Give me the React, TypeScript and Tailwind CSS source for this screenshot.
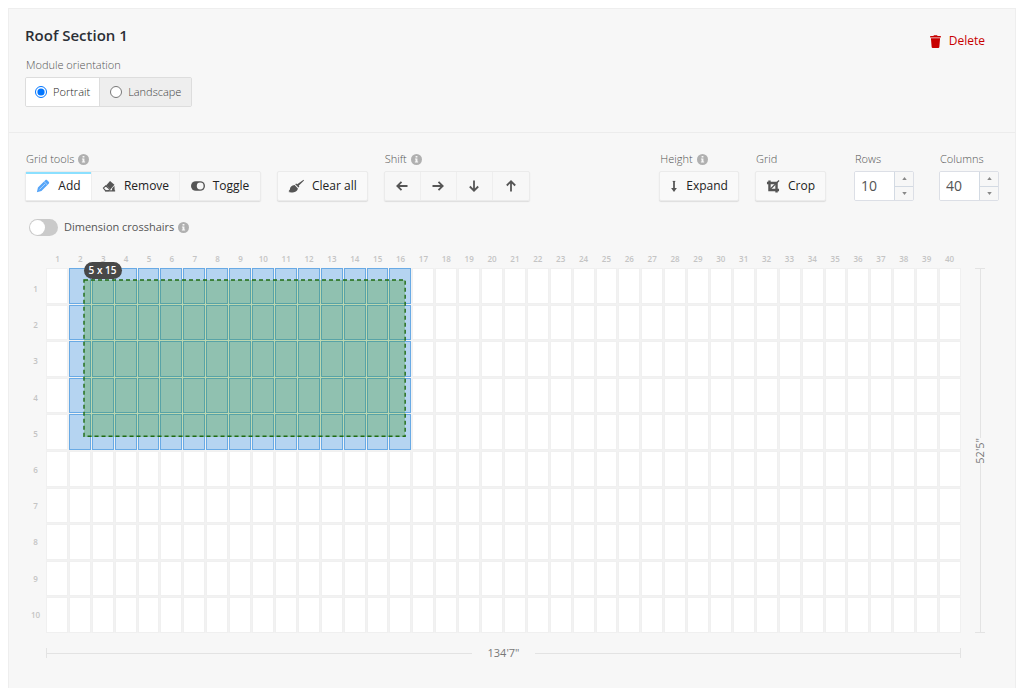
import { useId, useState } from 'react';
import type { ReactNode } from 'react';
import clsx from 'clsx';

const ROW_COUNT = 10;
const COLUMN_COUNT = 40;

const rowNumbers = Array.from({ length: ROW_COUNT }, (_, i) => i + 1);
const columnNumbers = Array.from({ length: COLUMN_COUNT }, (_, i) => i + 1);

const isInitiallyFilled = (row: number, column: number) => row <= 5 && column >= 2 && column <= 16;

function InfoIcon() {
  return (
    <svg viewBox="0 0 12 12" className="size-[11px] shrink-0" aria-hidden="true">
      <circle cx="6" cy="6" r="6" fill="#b0b0b0" />
      <path d="M5 2.2h2v1.6H5zM4.3 4.8H7v3.4h.8v1.2H4.2V8.2H5V6h-.7z" fill="#f7f7f7" />
    </svg>
  );
}

function PencilIcon() {
  return (
    <svg viewBox="0 0 16 16" className="size-[14px]" aria-hidden="true">
      <path
        d="M1 15l1.200-5.200L10.600 1.500c.7-.7 1.500-.7 2.200 0l1.700 1.700c.7.7.7 1.500 0 2.200L6.200 13.800z"
        fill="#56a5f8"
      />
      <path d="M9.300 3l3.700 3.700M4 11.900l6.300-6.200" stroke="#d6eaff" strokeWidth=".8" />
    </svg>
  );
}

function EraserIcon() {
  return (
    <svg viewBox="0 0 16 16" className="size-[14px]" aria-hidden="true">
      <path d="M9.200 2.200l5 4.500-4.400 5-5.200-4.400z" fill="#555" />
      <path d="M4.200 7.800L1.600 10.400l2.400 3h3.400l1.600-1.700z" fill="#f7f7f7" stroke="#555" strokeWidth="1.300" />
      <path d="M3.500 12.800H15v1.500H3.500zM11.500 10.800l2.700-3 .3 5h-3z" fill="#555" />
    </svg>
  );
}

function ToggleIcon() {
  return (
    <svg viewBox="0 0 16 16" className="size-[14px]" aria-hidden="true">
      <rect x="0" y="2.500" width="16" height="11" rx="5.500" fill="#555" />
      <circle cx="10.500" cy="8" r="3.900" fill="#f7f7f7" />
    </svg>
  );
}

function BrushIcon() {
  return (
    <svg viewBox="0 0 16 14" className="h-[14px] w-[16px]" fill="#555" aria-hidden="true">
      <path d="M15.600.8l.4.8-5.300 5.200.7 1-1 .8-3.200-3.300.9-.9 1.100.8z" />
      <path d="M6.600 6l3.300 3.400c-.4 2.100-1.900 3.400-4 3.800-1.900.4-3.800.3-5.600-.1l1.500-.9-1.100-.3 1.200-1.300C1.900 8 3.600 6.200 6.600 6z" />
    </svg>
  );
}

function CropIcon() {
  return (
    <svg viewBox="0 0 14 14" className="h-[13px] w-[14px]" aria-hidden="true">
      <path d="M3.200 .5v10.300h10.300M.5 3.200h10.300v10.300" fill="none" stroke="#555" strokeWidth="2.600" />
      <path d="M3.500 10.500l10-10" stroke="#555" strokeWidth="1.400" />
    </svg>
  );
}

function ExpandIcon() {
  return (
    <svg viewBox="0 0 8 14" className="h-[13px] w-[8px]" aria-hidden="true">
      <path d="M4 1v10" stroke="#555" strokeWidth="1.900" />
      <path d="M2.600 1.500h2.800" stroke="#555" strokeWidth="1" />
      <path d="M.9 8.600h6.200L4 13z" fill="#555" />
    </svg>
  );
}

function TrashIcon() {
  return (
    <svg viewBox="0 0 12 14" className="h-[13px] w-[11px]" fill="#c80000" aria-hidden="true">
      <path d="M4 .2h4v.8h3.800v1.700H.2V1H4zM1 3.500h10l-.8 9.500q-.1 1-1.200 1H3q-1.100 0-1.200-1z" />
    </svg>
  );
}

const arrowPaths = {
  left: 'M11.500 6H1.500M5.500 1.800L1.300 6l4.200 4.200',
  right: 'M.5 6h10M6.500 1.800L10.700 6l-4.200 4.200',
  down: 'M6 .5v10M1.800 6.500L6 10.700l4.200-4.200',
  up: 'M6 11.500v-10M1.800 5.500L6 1.300l4.200 4.200',
};

type Direction = keyof typeof arrowPaths;

function ToolGroup({ label, info = false, children }: { label: string; info?: boolean; children: ReactNode }) {
  return (
    <div role="group" aria-label={label}>
      <div className="flex h-4 items-center gap-1 px-px text-[11px] font-light text-[#555]">
        {label}
        {info && <InfoIcon />}
      </div>
      <div className="mt-1">{children}</div>
    </div>
  );
}

function ToolButton({ icon, children, onClick }: { icon: ReactNode; children: ReactNode; onClick?: () => void }) {
  return (
    <button
      type="button"
      onClick={onClick}
      className="flex h-[30px] items-center gap-2 rounded-xs border border-[#ebebeb] bg-[#f9f9f9] px-[10px] text-xs whitespace-nowrap text-[#222] shadow-[0_1px_1px_#ddd]"
    >
      {icon}
      {children}
    </button>
  );
}

function NumberField({ label, value, onChange }: { label: string; value: number; onChange: (value: number) => void }) {
  const id = useId();
  return (
    <div>
      <label htmlFor={id} className="block h-4 px-px text-[11px] leading-4 font-light text-[#555]">
        {label}
      </label>
      <div className="mt-1 flex h-[30px] w-[60px] overflow-hidden rounded-xs border border-[#dcdfe6] bg-white">
        <input
          id={id}
          type="text"
          inputMode="numeric"
          value={value}
          onChange={(e) => onChange(Number(e.target.value) || 0)}
          className="w-[39px] min-w-0 bg-white pl-[6px] text-sm text-[#555] outline-none"
        />
        <div className="flex flex-1 flex-col border-l border-[#d3dae3] bg-[#f7f7f7]">
          <button
            type="button"
            aria-label={`Increase ${label}`}
            onClick={() => onChange(value + 1)}
            className="flex flex-1 items-center justify-center border-b border-[#d3dae3]"
          >
            <svg viewBox="0 0 6 4" className="h-[3px] w-[5px]" fill="#888"><path d="M0 4l3-4 3 4z" /></svg>
          </button>
          <button
            type="button"
            aria-label={`Decrease ${label}`}
            onClick={() => onChange(Math.max(1, value - 1))}
            className="flex flex-1 items-center justify-center"
          >
            <svg viewBox="0 0 6 4" className="h-[3px] w-[5px]" fill="#888"><path d="M0 0l3 4 3-4z" /></svg>
          </button>
        </div>
      </div>
    </div>
  );
}

const tools = [
  { id: 'add', label: 'Add', icon: <PencilIcon />, width: 'w-[66px]' },
  { id: 'remove', label: 'Remove', icon: <EraserIcon />, width: 'w-[88px]' },
  { id: 'toggle', label: 'Toggle', icon: <ToggleIcon />, width: 'w-[80px]' },
];

function ModuleGrid() {
  return (
    <div className="mt-[11px] grid grid-cols-[21px_minmax(0,1fr)_38px] pr-4">
      <div />
      <div className="grid h-5 grid-cols-[repeat(40,minmax(0,1fr))] items-center pt-px text-center text-[8px] font-semibold text-[#c4c4c4]">
        {columnNumbers.map((column) => (
          <span key={column}>{column}</span>
        ))}
      </div>
      <div />

      <div className="grid grid-rows-10 items-center pt-[3px] text-center text-[8px] font-semibold text-[#c4c4c4]">
        {rowNumbers.map((row) => (
          <span key={row}>{row}</span>
        ))}
      </div>
      <div className="relative grid aspect-[915/365] grid-cols-[repeat(40,minmax(0,1fr))] grid-rows-10 gap-px bg-[#f2f2f2]">
        {rowNumbers.map((row) =>
          columnNumbers.map((column) => (
            <button
              key={`${row}-${column}`}
              type="button"
              aria-label={`Row ${row}, column ${column}`}
              className={clsx(
                'border',
                isInitiallyFilled(row, column) ? 'border-[#69aae5] bg-[#b5d4f1]' : 'border-[#f0f0f0] bg-white'
              )}
            />
          ))
        )}
        {/* drag selection */}
        <div className="absolute top-[3.4%] left-[4.1%] h-[42.8%] w-[35.1%] bg-[#2d9000]/27">
          <svg className="block size-full overflow-visible" aria-hidden="true">
            <rect
              width="100%"
              height="100%"
              fill="none"
              stroke="#1f6b12"
              strokeWidth="1.400"
              strokeDasharray="4 3"
            />
          </svg>
          <span className="absolute -top-[18px] left-0 flex h-[17px] w-[38px] items-center justify-center rounded-full bg-[#484848] text-[10px] font-semibold whitespace-nowrap text-white">
            5 x 15
          </span>
        </div>
      </div>
      <div className="flex flex-col items-center text-[11px] text-[#777]">
        <span className="h-px w-[10px] bg-[#e3e3e3]" />
        <span className="w-px flex-1 bg-[#e3e3e3]" />
        <span className="py-4 [writing-mode:sideways-lr]">52'5"</span>
        <span className="w-px flex-1 bg-[#e3e3e3]" />
        <span className="h-px w-[10px] bg-[#e3e3e3]" />
      </div>

      <div />
      <div className="mt-[10px] flex h-5 items-center text-[11px] text-[#777]">
        <span className="h-[10px] w-px bg-[#e3e3e3]" />
        <span className="h-px flex-1 bg-[#e3e3e3]" />
        <span className="px-4">134'7"</span>
        <span className="h-px flex-1 bg-[#e3e3e3]" />
        <span className="h-[10px] w-px bg-[#e3e3e3]" />
      </div>
      <div />
    </div>
  );
}

export default function App() {
  const [orientation, setOrientation] = useState('portrait');
  const [tool, setTool] = useState('add');
  const [crosshairs, setCrosshairs] = useState(false);
  const [rows, setRows] = useState(ROW_COUNT);
  const [columns, setColumns] = useState(COLUMN_COUNT);

  return (
    <main className="bg-white px-2 pt-2 font-['Open_Sans','Noto_Sans',sans-serif]">
      <section className="border border-b-0 border-[#eee] bg-[#f7f7f7] pb-[25px]">
        <header className="flex items-start justify-between border-b border-[#ececec] px-4 pt-[14px] pb-[25px]">
          <div>
            <h1 className="text-[15px] leading-6 font-semibold text-[#2b2f36]">Roof Section 1</h1>
            <fieldset className="mt-[10px]">
              <legend className="px-px text-[11px] leading-4 font-light text-[#555]">Module orientation</legend>
              <div className="mt-1 inline-flex h-[30px] overflow-hidden rounded-xs border border-[#ddd] text-[11px]">
                <label className="flex items-center gap-1.5 bg-white px-[9px] font-light text-[#222]">
                  <input
                    type="radio"
                    name="orientation"
                    checked={orientation === 'portrait'}
                    onChange={() => setOrientation('portrait')}
                    className="size-3"
                  />
                  Portrait
                </label>
                <label className="flex items-center gap-1.5 border-l border-[#ddd] bg-[#eee] px-[10px] font-light text-[#444]">
                  <input
                    type="radio"
                    name="orientation"
                    checked={orientation === 'landscape'}
                    onChange={() => setOrientation('landscape')}
                    className="size-3"
                  />
                  Landscape
                </label>
              </div>
            </fieldset>
          </div>
          <button type="button" className="mt-[6px] mr-[14px] flex h-6 items-center gap-2 text-xs text-[#c80000]">
            <TrashIcon />
            Delete
          </button>
        </header>

        <div className="pt-[18px] pl-4">
          <div className="flex items-end pr-4">
            <ToolGroup label="Grid tools" info>
              <div className="flex h-[30px] rounded-xs border border-[#ebebeb] shadow-[0_1px_1px_#ddd]">
                {tools.map(({ id, label, icon, width }) => (
                  <button
                    key={id}
                    type="button"
                    aria-pressed={tool === id}
                    onClick={() => setTool(id)}
                    className={clsx(
                      'flex items-center justify-center gap-2 border-r border-[#eee] text-xs text-[#222] last:border-r-0',
                      width,
                      tool === id && 'bg-white shadow-[inset_0_2px_#8be0ff]'
                    )}
                  >
                    {icon}
                    {label}
                  </button>
                ))}
              </div>
            </ToolGroup>
            <div className="ml-4">
              <ToolButton icon={<BrushIcon />}>Clear all</ToolButton>
            </div>
            <div className="ml-4">
              <ToolGroup label="Shift" info>
                <div className="flex h-[30px] rounded-xs border border-[#ebebeb] shadow-[0_1px_1px_#ddd]">
                  {(Object.keys(arrowPaths) as Direction[]).map((direction) => (
                    <button
                      key={direction}
                      type="button"
                      aria-label={`Shift ${direction}`}
                      className="flex w-9 items-center justify-center border-r border-[#eee] last:border-r-0"
                    >
                      <svg viewBox="0 0 12 12" className="size-[12px]" fill="none" stroke="#555" strokeWidth="1.800">
                        <path d={arrowPaths[direction]} />
                      </svg>
                    </button>
                  ))}
                </div>
              </ToolGroup>
            </div>
            <div className="ml-auto flex gap-4">
              <ToolGroup label="Height" info>
                <ToolButton icon={<ExpandIcon />}>Expand</ToolButton>
              </ToolGroup>
              <ToolGroup label="Grid">
                <ToolButton icon={<CropIcon />}>Crop</ToolButton>
              </ToolGroup>
              <div className="ml-3 flex gap-[25px]">
                <NumberField label="Rows" value={rows} onChange={setRows} />
                <NumberField label="Columns" value={columns} onChange={setColumns} />
              </div>
            </div>
          </div>

          <div className="mt-4 flex h-5 items-center gap-1 pl-1">
            <label className="flex cursor-pointer items-center gap-1.5 text-[11px] text-[#555]">
              <input
                type="checkbox"
                role="switch"
                checked={crosshairs}
                onChange={(e) => setCrosshairs(e.target.checked)}
                className="h-[17px] w-[29px] appearance-none rounded-full bg-[#cacaca] p-px before:block before:size-[15px] before:rounded-full before:bg-white checked:bg-[#56a5f8] checked:before:ml-3"
              />
              Dimension crosshairs
            </label>
            <InfoIcon />
          </div>

          <ModuleGrid />
        </div>
      </section>
    </main>
  );
}
